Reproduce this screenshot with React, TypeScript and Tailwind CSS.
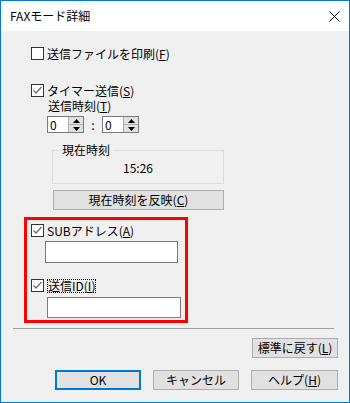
import React from 'react';

const font = { fontFamily: '"Noto Sans CJK JP", "Noto Sans", sans-serif' };

function Check({ checked }: { checked?: boolean }) {
  return (
    <span className="w-[13px] h-[13px] border border-[#333333] bg-white flex items-center justify-center shrink-0">
      {checked && (
        <svg width="11" height="11" viewBox="0 0 11 11">
          <polyline points="1.5,5.5 4,8 9.5,2" fill="none" stroke="#6e6e6e" strokeWidth="1.3" />
        </svg>
      )}
    </span>
  );
}

function Spin() {
  return (
    <div className="flex w-[37px] h-[17px] border border-[#7a7a7a] bg-white">
      <div className="flex-1 text-[12px] leading-[15px] pl-[2px]">0</div>
      <div className="w-[15px] flex flex-col border-l border-[#adadad]">
        <div className="flex-1 bg-[#e1e1e1] border-b border-[#adadad] flex items-center justify-center">
          <svg width="7" height="4" viewBox="0 0 7 4"><polygon points="0,4 7,4 3.5,0" fill="#000" /></svg>
        </div>
        <div className="flex-1 bg-[#e1e1e1] flex items-center justify-center">
          <svg width="7" height="4" viewBox="0 0 7 4"><polygon points="0,0 7,0 3.5,4" fill="#000" /></svg>
        </div>
      </div>
    </div>
  );
}

function Btn({ children, w, primary }: { children: React.ReactNode; w: string; primary?: boolean }) {
  return (
    <div
      className={`${w} h-[20px] bg-[#e1e1e1] flex items-center justify-center text-[12px] leading-none ${
        primary ? 'border-2 border-[#0078d7]' : 'border border-[#adadad]'
      }`}
    >
      {children}
    </div>
  );
}

export default function App() {
  return (
    <div style={font} className="w-[350px] h-[403px] border border-[#0078d7] bg-[#f0f0f0] flex flex-col text-black">
      {/* Title bar */}
      <div className="h-[30px] bg-white flex items-center justify-between pl-[9px] pr-[9px] shrink-0">
        <span className="text-[12px]">FAXモード詳細</span>
        <svg width="11" height="11" viewBox="0 0 11 11">
          <path d="M0.5 0.5 L10.5 10.5 M10.5 0.5 L0.5 10.5" stroke="#000" strokeWidth="1" />
        </svg>
      </div>

      <div className="flex flex-col pl-[30px] text-[12px] leading-[14px]">
        <div className="mt-[16px] flex items-center gap-[3px] h-[13px]">
          <Check />
          <span>送信ファイルを印刷(<u>F</u>)</span>
        </div>

        <div className="mt-[24px] flex items-center gap-[3px] h-[13px]">
          <Check checked />
          <span>タイマー送信(<u>S</u>)</span>
        </div>
        <div className="mt-[2px] ml-[17px]">送信時刻(<u>T</u>)</div>
        <div className="mt-[3px] ml-[16px] flex items-center">
          <Spin />
          <span className="w-[18px] text-center">:</span>
          <Spin />
        </div>

        <div className="mt-[17px] ml-[21px] w-[172px] h-[34px] border border-[#dcdcdc] relative flex items-center justify-center">
          <span className="absolute -top-[8px] left-[6px] px-[3px] bg-[#f0f0f0]">現在時刻</span>
          <span className="mt-[1px]">15:26</span>
        </div>

        <div className="mt-[6px] ml-[22px]">
          <Btn w="w-[171px]">現在時刻を反映(<u>C</u>)</Btn>
        </div>

        <div className="mt-[7px] -ml-[7px] w-[164px] h-[106px] border-[3px] border-[#ff0000] flex flex-col pl-[4px] pt-[4px]">
          <div className="flex items-center gap-[3px] h-[13px]">
            <Check checked />
            <span>SUBアドレス(<u>A</u>)</span>
          </div>
          <div className="mt-[4px] ml-[14px] w-[133px] h-[22px] bg-white border border-[#7a7a7a]" />
          <div className="mt-[16px] flex items-center gap-[3px] h-[13px]">
            <Check checked />
            <span className="border border-dotted border-black leading-[12px]">送信ID(<u>I</u>)</span>
          </div>
          <div className="mt-[5px] ml-[16px] w-[134px] h-[21px] bg-white border border-[#7a7a7a]" />
        </div>
      </div>

      <div className="mt-[5px] ml-[12px] w-[321px] h-[1px] bg-[#a0a0a0]" />

      <div className="mt-[9px] flex justify-end pr-[11px]">
        <Btn w="w-[86px]">標準に戻す(<u>L</u>)</Btn>
      </div>

      <div className="mt-[12px] flex pl-[54px] gap-[12px]">
        <Btn w="w-[86px]" primary>OK</Btn>
        <Btn w="w-[86px]">キャンセル</Btn>
        <Btn w="w-[87px]">ヘルプ(<u>H</u>)</Btn>
      </div>
    </div>
  );
}
